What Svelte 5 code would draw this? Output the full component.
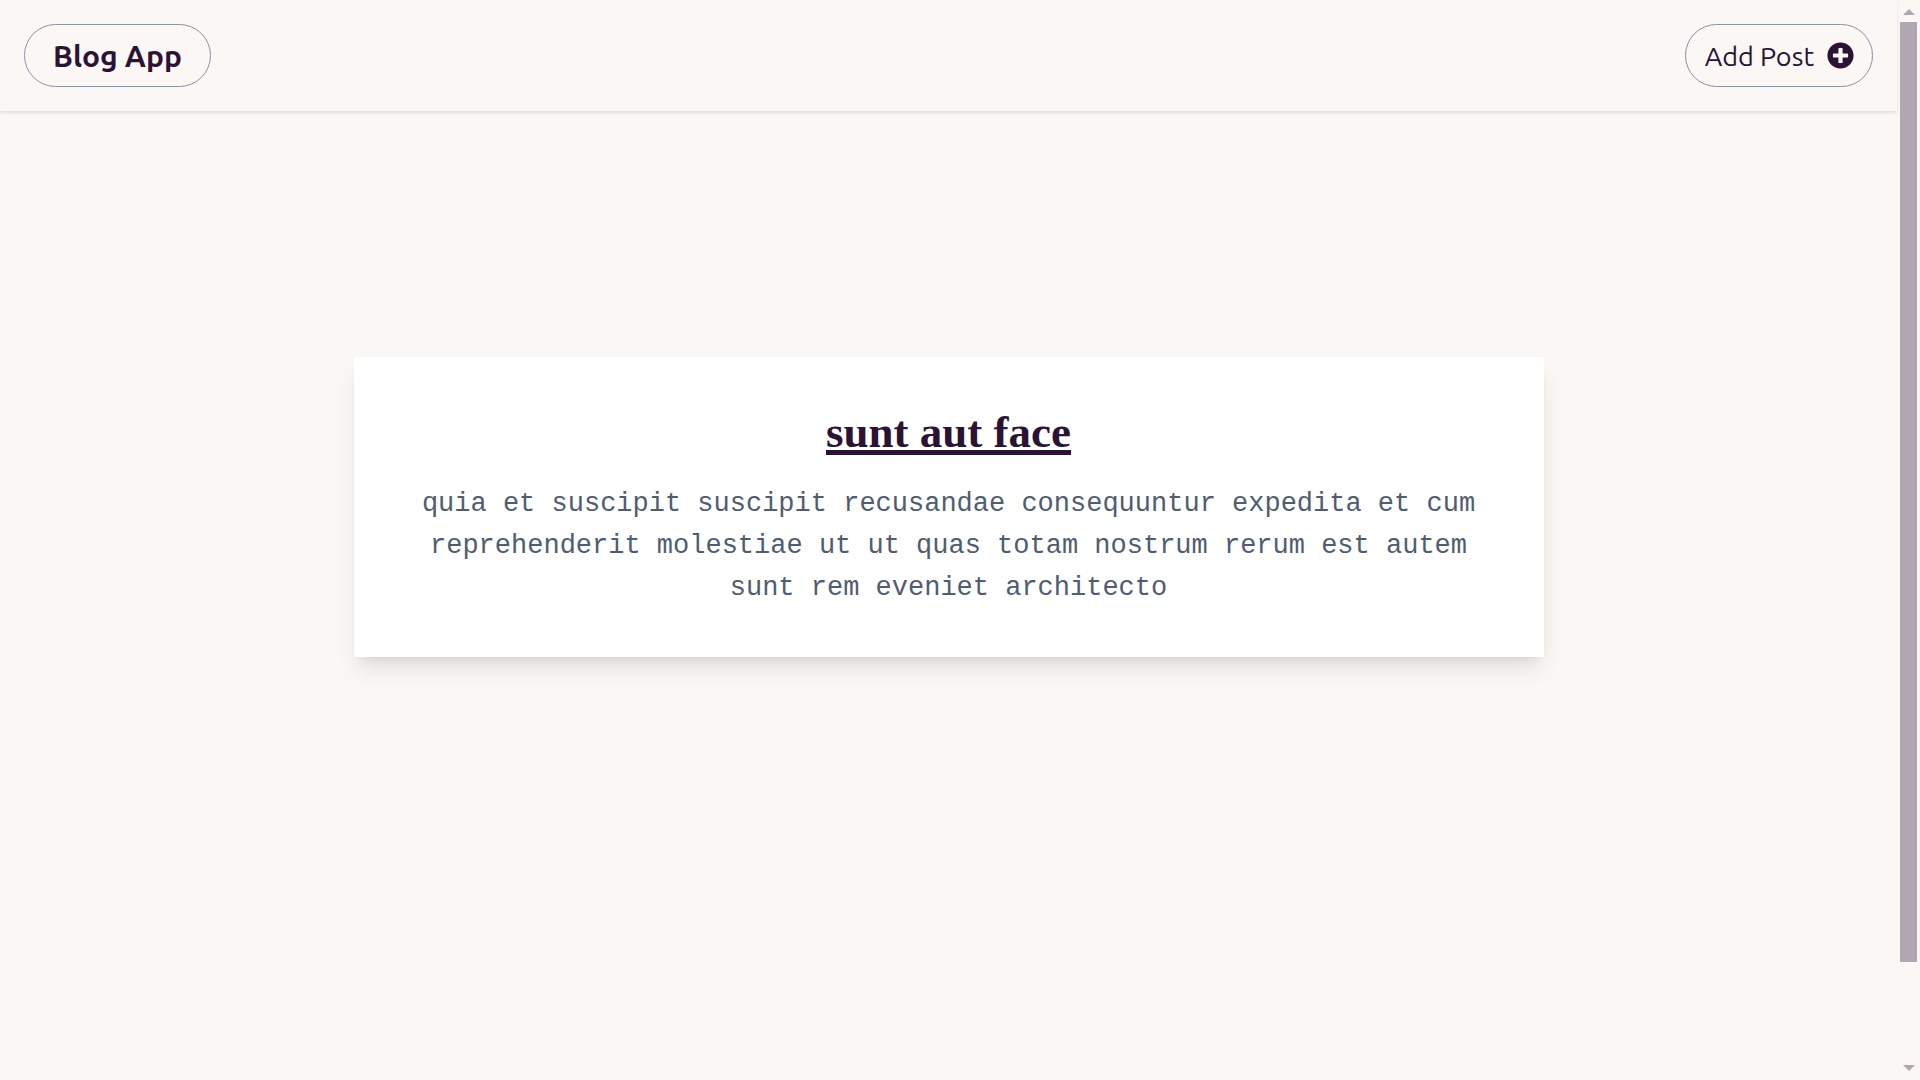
<script>
  const post = {
    title: 'sunt aut face',
    body: 'quia et suscipit suscipit recusandae consequuntur expedita et cum reprehenderit molestiae ut ut quas totam nostrum rerum est autem sunt rem eveniet architecto'
  };
</script>

<div class="shell">
  <div class="page">
    <header>
      <a class="pill brand" href="#home">Blog App</a>
      <button class="pill add" type="button">
        Add Post
        <svg viewBox="0 0 512 512" aria-hidden="true">
          <path fill="currentColor" d="M256 8C119 8 8 119 8 256s111 248 248 248 248-111 248-248S393 8 256 8zm144 276c0 6.600-5.400 12-12 12h-92v92c0 6.600-5.400 12-12 12h-56c-6.600 0-12-5.400-12-12v-92h-92c-6.600 0-12-5.400-12-12v-56c0-6.600 5.400-12 12-12h92v-92c0-6.600 5.400-12 12-12h56c6.600 0 12 5.400 12 12v92h92c6.600 0 12 5.400 12 12v56z" />
        </svg>
      </button>
    </header>
    <main>
      <article>
        <h1>{post.title}</h1>
        <p>{post.body}</p>
      </article>
    </main>
  </div>
  <div class="scrollbar" aria-hidden="true">
    <svg viewBox="0 0 12 6"><path d="M6 0l6 6H0z" fill="#b1a7b3" /></svg>
    <div class="track"><div class="thumb"></div></div>
    <svg viewBox="0 0 12 6"><path d="M0 0h12L6 6z" fill="#b1a7b3" /></svg>
  </div>
</div>

<style>
  :global(body) {
    margin: 0;
    background: #fbf7f4;
    color: #2a1335;
  }

  .shell {
    display: grid;
    grid-template-columns: 1fr 23px;
    min-height: 100vh;
  }

  .page {
    display: flex;
    flex-direction: column;
    min-width: 0;
  }

  header {
    display: flex;
    justify-content: space-between;
    align-items: center;
    padding: 24px;
    box-shadow: 0 2px 3px rgba(0, 0, 0, 0.1);
  }

  .pill {
    box-sizing: border-box;
    display: flex;
    align-items: center;
    justify-content: center;
    height: 63px;
    border: 1px solid #8593aa;
    border-radius: 32px;
    background: transparent;
    color: inherit;
    font-family: Ubuntu, "Noto Sans", sans-serif;
    text-decoration: none;
    white-space: nowrap;
  }

  .brand {
    padding: 0 28px;
    font-size: 30px;
    font-weight: 700;
  }

  .add {
    gap: 13px;
    padding: 0 18px 0 19px;
    font-size: 27px;
    cursor: pointer;
  }

  .add svg {
    width: 27px;
    height: 27px;
  }

  main {
    flex: 1;
    display: flex;
    align-items: center;
    justify-content: center;
    padding: 0 24px 177px;
  }

  article {
    box-sizing: border-box;
    max-width: 1190px;
    padding: 48px;
    background: #fff;
    text-align: center;
    box-shadow:
      0 15px 22px -4px rgba(0, 0, 0, 0.1),
      0 6px 9px -6px rgba(0, 0, 0, 0.1);
  }

  h1 {
    margin: 0 0 24px;
    font: 700 45px/54px "Liberation Serif", serif;
    text-decoration: underline;
    text-decoration-thickness: 5px;
  }

  p {
    margin: 0;
    color: #505d71;
    font: 27px/42px "Liberation Mono", monospace;
  }

  .scrollbar {
    box-sizing: border-box;
    display: flex;
    flex-direction: column;
    align-items: center;
    gap: 7px;
    height: 100vh;
    padding: 9px 0;
  }

  .scrollbar svg {
    flex: none;
    width: 12px;
    height: 6px;
  }

  .track {
    flex: 1;
    width: 17px;
  }

  .thumb {
    height: 90.7%;
    background: #b1a7b3;
  }
</style>
